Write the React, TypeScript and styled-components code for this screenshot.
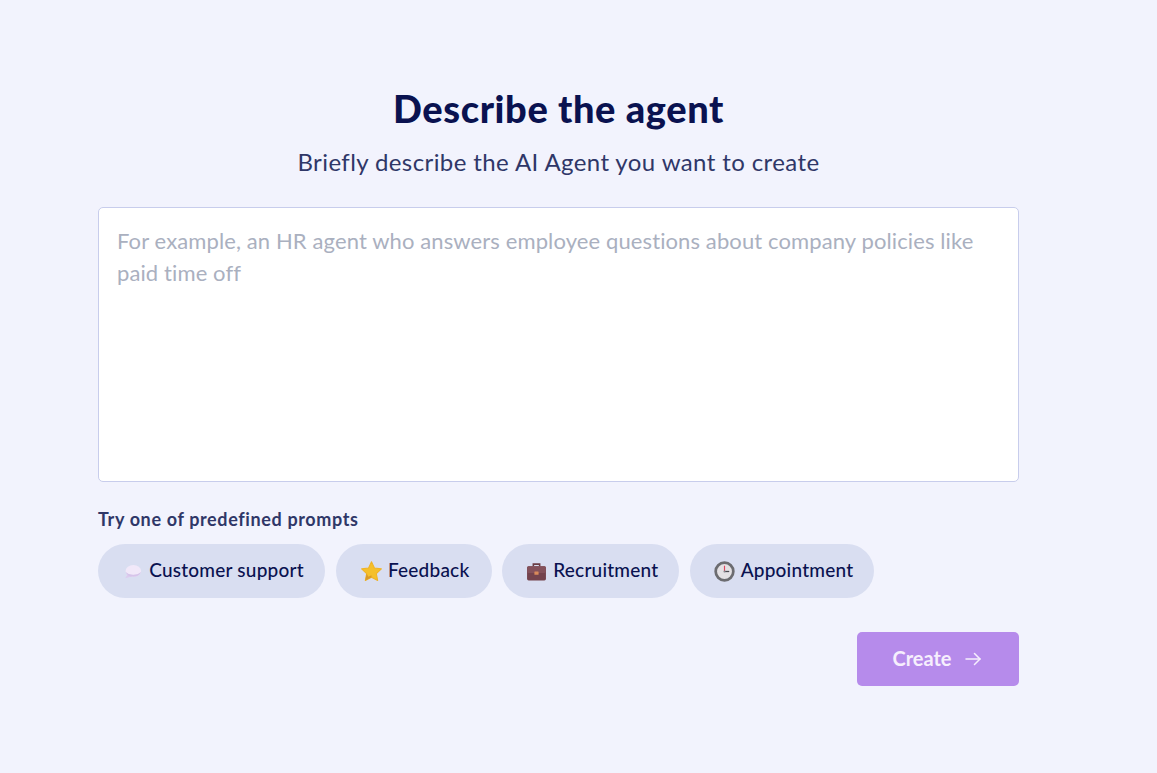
import React from "react";
import styled, { createGlobalStyle } from "styled-components";

const Global = createGlobalStyle`
  html, body { margin: 0; padding: 0; background: #f2f3fd; }
  body { font-family: "Lato", "Liberation Sans", sans-serif; }
`;

const Page = styled.main`
  box-sizing: border-box;
  width: 1157px;
  height: 773px;
  padding: 86px 138px 0 98px;
  display: flex;
  flex-direction: column;
  background: #f2f3fd;
`;

const Title = styled.h1`
  margin: 0;
  height: 46px;
  font-size: 38px;
  line-height: 45px;
  font-weight: 900;
  letter-spacing: 0.6px;
  color: #0a1250;
  text-align: center;
`;

const Subtitle = styled.p`
  margin: 14px 0 0;
  height: 32px;
  font-size: 24px;
  line-height: 32px;
  letter-spacing: 0.4px;
  color: #2f3768;
  text-align: center;
`;

const Prompt = styled.textarea`
  box-sizing: border-box;
  display: block;
  width: 921px;
  height: 275px;
  margin-top: 29px;
  padding: 17px 18px;
  background: #fff;
  border: 1px solid #c8cdec;
  border-radius: 5px;
  resize: none;
  outline: none;
  font-family: inherit;
  font-size: 22px;
  line-height: 32px;
  letter-spacing: 0.11px;
  color: #0a1250;
  &::placeholder { color: #aab0bf; opacity: 1; }
`;

const Label = styled.div`
  margin-top: 26px;
  margin-bottom: 1px;
  height: 22px;
  font-size: 18px;
  line-height: 22px;
  font-weight: 700;
  letter-spacing: 0.63px;
  color: #2f3768;
`;

const Chips = styled.div`
  display: flex;
  gap: 10.67px;
  margin-top: 13px;
`;

const Chip = styled.button<{ $width: number }>`
  box-sizing: border-box;
  width: ${(p) => p.$width}px;
  height: 54px;
  padding: 0 0 3px 3px;
  display: flex;
  align-items: center;
  justify-content: center;
  gap: 6px;
  border: 0;
  border-radius: 27px;
  background: #d9def1;
  color: #0a1250;
  font-family: inherit;
  font-size: 19px;
  font-weight: 500;
  letter-spacing: 0.22px;
  white-space: nowrap;
`;

const Emoji = styled.svg`
  width: 21px;
  height: 21px;
  flex: none;
  position: relative;
  top: 1.5px;
`;

const Footer = styled.div`
  display: flex;
  justify-content: flex-end;
  margin-top: 34px;
`;

const CreateButton = styled.button`
  box-sizing: border-box;
  width: 162px;
  height: 54px;
  padding: 0 3px 3px 0;
  display: flex;
  align-items: center;
  justify-content: center;
  gap: 13px;
  border: 0;
  border-radius: 5px;
  background: #b68beb;
  color: #f6effd;
  font-family: inherit;
  font-size: 20px;
  font-weight: 700;
`;

const ArrowIcon = styled.svg`
  position: relative;
  top: 1px;
`;

const Speech = () => (
  <Emoji viewBox="0 0 20 20">
    <ellipse cx="10.8" cy="9.5" rx="7.4" ry="5.6" fill="#f1e8f9" />
    <path d="M5.5 12.5 L3 16.5 L10 14.6 Z" fill="#dccbee" />
    <path d="M3.4 10.5 Q5 15 11 15 Q16.5 15 18.2 10.5 Q15 13.4 10.5 13.2 Q6 13 3.4 10.5 Z" fill="#d6c4ea" />
  </Emoji>
);

const Star = () => (
  <Emoji viewBox="0 0 20 20">
    <path
      d="M10 .8 L12.8 6.6 L19.4 7.5 L14.6 12 L15.9 18.6 L10 15.4 L4.1 18.6 L5.4 12 L.6 7.5 L7.2 6.6 Z"
      fill="#f5c02c"
      stroke="#f0b428"
      strokeWidth="1"
      strokeLinejoin="round"
    />
    <path d="M5.4 12 L4.1 18.6 L10 15.4 L10 13.5 L7 15 Z" fill="#d99a2a" />
  </Emoji>
);

const Briefcase = () => (
  <Emoji viewBox="0 0 20 20">
    <path d="M7 5 V3 H13 V5" fill="none" stroke="#6a3d45" strokeWidth="1.5" />
    <rect x="1" y="5" width="18" height="13.5" rx="1.5" fill="#74434d" />
    <rect x="1" y="5" width="18" height="6.5" rx="1.5" fill="#84515b" />
    <rect x="8" y="10" width="4" height="3" rx=".5" fill="#d98a5a" />
  </Emoji>
);

const Clock = () => (
  <Emoji viewBox="0 0 20 20">
    <circle cx="10" cy="10" r="8.4" fill="#e4e1e4" stroke="#6c6c70" strokeWidth="2.6" />
    <path d="M10 10 V4.5" stroke="#e0475f" strokeWidth="1.1" />
    <path d="M10 10 H14.5" stroke="#4a4a50" strokeWidth="1.2" />
    <circle cx="10" cy="10" r="1" fill="#8a8a90" />
  </Emoji>
);

const Arrow = () => (
  <ArrowIcon width="16" height="14" viewBox="0 0 16 14" fill="none" stroke="#f6effd" strokeWidth="1.5" strokeLinecap="round" strokeLinejoin="round">
    <path d="M1 7 H15" />
    <path d="M9.5 1.5 L15 7 L9.5 12.5" />
  </ArrowIcon>
);

const prompts: { name: string; width: number; icon: React.ReactNode }[] = [
  { name: "Customer support", width: 227, icon: <Speech /> },
  { name: "Feedback", width: 156, icon: <Star /> },
  { name: "Recruitment", width: 177, icon: <Briefcase /> },
  { name: "Appointment", width: 184, icon: <Clock /> },
];

export default function App() {
  return (
    <Page>
      <Global />
      <Title>Describe the agent</Title>
      <Subtitle>Briefly describe the AI Agent you want to create</Subtitle>
      <Prompt placeholder="For example, an HR agent who answers employee questions about company policies like paid time off" />
      <Label>Try one of predefined prompts</Label>
      <Chips>
        {prompts.map((p) => (
          <Chip key={p.name} $width={p.width}>
            {p.icon}
            {p.name}
          </Chip>
        ))}
      </Chips>
      <Footer>
        <CreateButton>
          Create
          <Arrow />
        </CreateButton>
      </Footer>
    </Page>
  );
}
